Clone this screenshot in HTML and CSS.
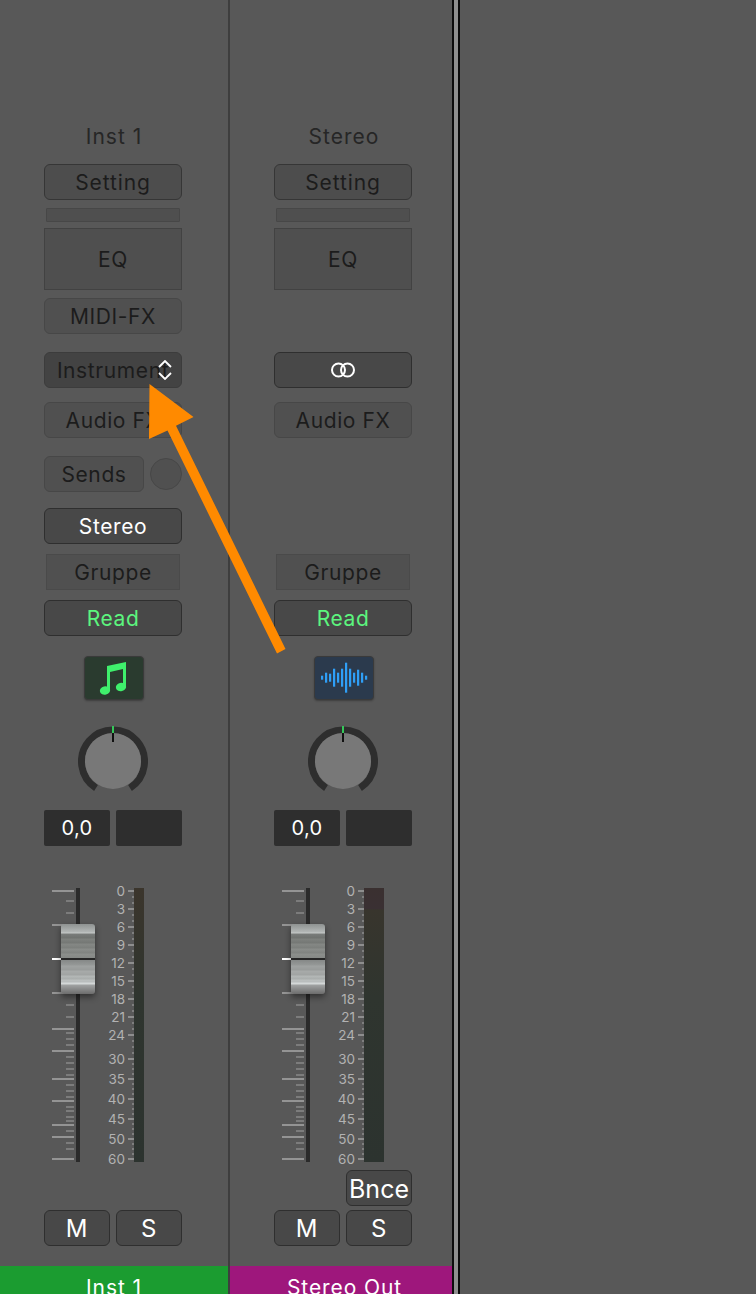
FILE: index.html
```html
<!DOCTYPE html>
<html lang="en">
<head>
    <meta charset="UTF-8">
    <title>Mixer</title>
    <link rel="stylesheet" href="styles.css">
</head>
<body>
    <svg class="defs" aria-hidden="true">
        <defs>
            <linearGradient id="meterInst" x1="0" y1="0" x2="0" y2="1">
                <stop offset="0" stop-color="#3b352c"/>
                <stop offset="0.4" stop-color="#2f352f"/>
                <stop offset="1" stop-color="#2c332f"/>
            </linearGradient>
            <linearGradient id="meterOut" x1="0" y1="0" x2="0" y2="1">
                <stop offset="0" stop-color="#3a3030"/>
                <stop offset="0.075" stop-color="#3a3033"/>
                <stop offset="0.08" stop-color="#38352d"/>
                <stop offset="0.4" stop-color="#2f352f"/>
                <stop offset="1" stop-color="#2c332f"/>
            </linearGradient>
            <symbol id="faderTicks" viewBox="0 0 138 280">
                <path class="tick-long" d="M8 6h22M8 40h22M8 108h22M8 144h22M8 166h22M8 194h22M8 216h22M8 240h22M8 252h22M8 274h22"/>
                <path class="tick-short" d="M22 16h8M22 28h8M22 120h8M22 132h8M22 148h8M22 154h8M22 160h8M22 172h8M22 178h8M22 184h8M22 190h8M22 200h8M22 206h8M22 212h8M22 222h8M22 226h8M22 232h8M22 236h8M22 246h8M22 258h8M22 264h8"/>
                <path class="tick-zero" d="M8 74h9"/>
                <rect class="track" x="32" y="3" width="4" height="274"/>
                <path class="tick-scale" d="M84 6h6M84 24h6M84 42h6M84 60h6M84 78h6M84 96h6M84 114h6M84 132h6M84 150h6M84 174h6M84 194h6M84 214h6M84 234h6M84 254h6M84 274h6"/>
                <path class="tick-dot" d="M88 12h2M88 18h2M88 30h2M88 36h2M88 48h2M88 54h2M88 66h2M88 72h2M88 84h2M88 90h2M88 102h2M88 108h2M88 120h2M88 126h2M88 138h2M88 144h2M88 156h2M88 162h2M88 168h2M88 179h2M88 184h2M88 189h2M88 199h2M88 204h2M88 209h2M88 219h2M88 224h2M88 229h2M88 239h2M88 244h2M88 249h2M88 259h2M88 264h2M88 269h2"/>
            </symbol>
        </defs>
    </svg>

    <div class="mixer">
        <section class="strip strip-inst">
            <div class="name">Inst 1</div>
            <div class="btn row-setting btn-setting">Setting</div>
            <div class="thin-bar"></div>
            <div class="eq">EQ</div>
            <div class="btn row-midi btn-dim">MIDI-FX</div>
            <div class="btn row-input btn-input">
                Instrument
                <svg class="updown" viewBox="0 0 14 20">
                    <path d="M1 7 7 1l6 6M1 13l6 6 6-6"/>
                </svg>
            </div>
            <div class="btn row-fx btn-dim">Audio FX</div>
            <div class="row-sends">
                <div class="btn btn-dim btn-sends">Sends</div>
                <div class="send-knob"></div>
            </div>
            <div class="btn row-output btn-on">Stereo</div>
            <div class="group row-group">Gruppe</div>
            <div class="btn row-read btn-on read">Read</div>
            <div class="track-icon icon-inst">
                <svg viewBox="0 0 60 44">
                    <path class="note" d="M23 10 42 6v25h-3V13l-13 3v18.500h-3z"/>
                    <ellipse class="note" cx="21" cy="34.500" rx="5.200" ry="4.200" transform="rotate(-15 21 34.500)"/>
                    <ellipse class="note" cx="37" cy="31" rx="5.200" ry="4.200" transform="rotate(-15 37 31)"/>
                </svg>
            </div>
            <svg class="knob" viewBox="0 0 70 70">
                <path class="knob-ring" d="M18 62A31.500 31.500 0 1 1 52 62"/>
                <circle class="knob-disc" cx="35" cy="35" r="28"/>
                <rect class="knob-mark" x="34" y="0" width="2" height="7"/>
                <rect class="knob-line" x="34" y="7" width="2" height="9"/>
            </svg>
            <div class="values">
                <div class="value">0,0</div>
                <div class="value"></div>
            </div>
            <div class="fader">
                <svg class="scale" viewBox="0 0 138 280">
                    <rect x="90" y="3" width="10" height="274" fill="url(#meterInst)"/>
                    <use href="#faderTicks" width="138" height="280"/>
                    <text x="81" y="11">0</text><text x="81" y="29">3</text><text x="81" y="47">6</text>
                    <text x="81" y="65">9</text><text x="81" y="83">12</text><text x="81" y="101">15</text>
                    <text x="81" y="119">18</text><text x="81" y="137">21</text><text x="81" y="155">24</text>
                    <text x="81" y="179">30</text><text x="81" y="199">35</text><text x="81" y="219">40</text>
                    <text x="81" y="239">45</text><text x="81" y="259">50</text><text x="81" y="279">60</text>
                </svg>
                <div class="cap"></div>
            </div>
            <div class="btn row-bounce slot"></div>
            <div class="pair">
                <div class="btn btn-on btn-big">M</div>
                <div class="btn btn-on btn-big">S</div>
            </div>
            <div class="label label-inst">Inst 1</div>
        </section>

        <section class="strip strip-out">
            <div class="name">Stereo</div>
            <div class="btn row-setting btn-setting">Setting</div>
            <div class="thin-bar"></div>
            <div class="eq">EQ</div>
            <div class="btn row-midi slot"></div>
            <div class="btn row-input btn-on">
                <svg class="link" viewBox="0 0 26 16">
                    <circle cx="8.500" cy="8" r="6.500"/>
                    <circle cx="17.500" cy="8" r="6.500"/>
                </svg>
            </div>
            <div class="btn row-fx btn-dim">Audio FX</div>
            <div class="row-sends"></div>
            <div class="btn row-output slot"></div>
            <div class="group row-group">Gruppe</div>
            <div class="btn row-read btn-on read">Read</div>
            <div class="track-icon icon-out">
                <svg viewBox="0 0 60 44">
                    <rect class="wave" x="7" y="19.700" width="2.200" height="4"/>
                    <rect class="wave" x="11" y="16.700" width="2.200" height="10"/>
                    <rect class="wave" x="15" y="17.700" width="2.200" height="8"/>
                    <rect class="wave" x="19" y="12.700" width="2.200" height="18"/>
                    <rect class="wave" x="23" y="16.700" width="2.200" height="10"/>
                    <rect class="wave" x="27" y="12.700" width="2.200" height="18"/>
                    <rect class="wave" x="31" y="6.700" width="2.200" height="30"/>
                    <rect class="wave" x="35" y="12.700" width="2.200" height="18"/>
                    <rect class="wave" x="39" y="16.700" width="2.200" height="10"/>
                    <rect class="wave" x="43" y="13.700" width="2.200" height="16"/>
                    <rect class="wave" x="47" y="16.700" width="2.200" height="10"/>
                    <rect class="wave" x="51" y="19.700" width="2.200" height="4"/>
                </svg>
            </div>
            <svg class="knob" viewBox="0 0 70 70">
                <path class="knob-ring" d="M18 62A31.500 31.500 0 1 1 52 62"/>
                <circle class="knob-disc" cx="35" cy="35" r="28"/>
                <rect class="knob-mark" x="34" y="0" width="2" height="7"/>
                <rect class="knob-line" x="34" y="7" width="2" height="9"/>
            </svg>
            <div class="values">
                <div class="value">0,0</div>
                <div class="value"></div>
            </div>
            <div class="fader">
                <svg class="scale" viewBox="0 0 138 280">
                    <rect x="90" y="3" width="20" height="274" fill="url(#meterOut)"/>
                    <use href="#faderTicks" width="138" height="280"/>
                    <text x="81" y="11">0</text><text x="81" y="29">3</text><text x="81" y="47">6</text>
                    <text x="81" y="65">9</text><text x="81" y="83">12</text><text x="81" y="101">15</text>
                    <text x="81" y="119">18</text><text x="81" y="137">21</text><text x="81" y="155">24</text>
                    <text x="81" y="179">30</text><text x="81" y="199">35</text><text x="81" y="219">40</text>
                    <text x="81" y="239">45</text><text x="81" y="259">50</text><text x="81" y="279">60</text>
                </svg>
                <div class="cap"></div>
            </div>
            <div class="btn row-bounce btn-on btn-bounce">Bnce</div>
            <div class="pair">
                <div class="btn btn-on btn-big">M</div>
                <div class="btn btn-on btn-big">S</div>
            </div>
            <div class="label label-out">Stereo Out</div>
        </section>

        <div class="rail"></div>
        <div class="empty"></div>
    </div>

    <svg class="arrow" viewBox="0 0 756 1294" aria-hidden="true">
        <polygon points="149.500,384 193.500,417 176,425.800 285.500,649 277,653.500 167.500,430.500 149,439"/>
    </svg>
</body>
</html>
```

FILE: styles.css
```css
html, body {
    margin: 0;
    padding: 0;
}
body {
    position: relative;
    width: 756px;
    height: 1294px;
    overflow: hidden;
    background-color: #585858;
    font-family: Inter, "Liberation Sans", sans-serif;
    font-size: 21px;
    letter-spacing: 0.6px;
    color: #1c1c1c;
}
.defs {
    position: absolute;
    width: 0;
    height: 0;
}
.mixer {
    display: flex;
    height: 1294px;
}
.strip {
    display: flex;
    flex-direction: column;
    box-sizing: border-box;
    height: 1294px;
    padding: 124px 0 0 44px;
}
.strip-inst {
    width: 230px;
    border-right: 2px solid #3e3e3e;
}
.strip-out {
    width: 222px;
}
.rail {
    width: 4px;
    background-color: #8f8f8f;
    border-left: 2px solid #0c0c0c;
    border-right: 2px solid #0c0c0c;
}
.empty {
    flex: 1;
}
.name {
    width: 140px;
    height: 26px;
    line-height: 26px;
    text-align: center;
    letter-spacing: 1px;
    color: #262626;
}

/* buttons */
.btn {
    position: relative;
    box-sizing: border-box;
    display: flex;
    align-items: center;
    justify-content: center;
    width: 138px;
    height: 36px;
    flex: none;
    padding-top: 1px;
    border: 1px solid #3a3a3a;
    border-radius: 6px;
}
.slot {
    border-color: transparent;
}
.btn-setting {
    background-color: #4d4d4d;
    border-color: #363636;
    letter-spacing: 0.9px;
}
.btn-dim {
    background-color: #505050;
    border-color: #474747;
}
.btn-input {
    background-color: #434343;
    border-color: #3c3c3c;
}
.btn-on {
    background-color: #484848;
    border-color: #2f2f2f;
    color: #fff;
}
.read {
    color: #5cf57e;
}
.btn-sends {
    width: 100px;
}
.btn-big {
    width: 66px;
    font-size: 24px;
}
.btn-bounce {
    width: 66px;
    margin-left: 72px;
    font-size: 25px;
    letter-spacing: 0;
}

/* vertical rhythm, the two strips share it */
.row-setting {
    margin-top: 14px;
}
.thin-bar {
    box-sizing: border-box;
    width: 134px;
    height: 14px;
    margin: 8px 0 0 2px;
    background-color: #4f4f4f;
    border: 1px solid #474747;
    border-radius: 1px;
}
.eq {
    box-sizing: border-box;
    display: flex;
    align-items: center;
    justify-content: center;
    width: 138px;
    height: 62px;
    margin-top: 6px;
    padding-top: 1px;
    background-color: #4f4f4f;
    border: 1px solid #424242;
}
.row-midi {
    margin-top: 8px;
}
.row-input {
    margin-top: 18px;
}
.row-fx {
    margin-top: 14px;
}
.row-sends {
    display: flex;
    align-items: center;
    gap: 6px;
    width: 138px;
    height: 36px;
    margin-top: 18px;
}
.send-knob {
    box-sizing: border-box;
    width: 32px;
    height: 32px;
    background-color: #505050;
    border: 1px solid #474747;
    border-radius: 50%;
}
.row-output {
    margin-top: 16px;
}
.group {
    box-sizing: border-box;
    display: flex;
    align-items: center;
    justify-content: center;
    width: 134px;
    height: 36px;
    padding-top: 1px;
    background-color: #505050;
    border: 1px solid #4a4a4a;
}
.row-group {
    margin: 10px 0 0 2px;
}
.row-read {
    margin-top: 10px;
}

/* chevrons and link glyph */
.updown {
    position: absolute;
    top: 7px;
    left: 113px;
    width: 14px;
    height: 20px;
    fill: none;
    stroke: #fff;
    stroke-width: 1.800;
}
.link {
    width: 26px;
    height: 16px;
    margin-top: -1px;
    fill: none;
    stroke: #fff;
    stroke-width: 2;
}

/* track icon */
.track-icon {
    box-sizing: border-box;
    width: 60px;
    height: 44px;
    margin: 20px 0 0 40px;
    border: 1px solid #3a3a3a;
    border-radius: 4px;
    box-shadow: 0 1px 2px rgba(0, 0, 0, 0.3);
}
.track-icon svg {
    display: block;
    width: 60px;
    height: 44px;
    margin: -1px;
}
.icon-inst {
    background-color: #2a3b2f;
}
.icon-out {
    background-color: #2b3a4d;
}
.note {
    fill: #3ff06c;
}
.wave {
    fill: #2f9ff7;
}

/* pan knob */
.knob {
    display: block;
    width: 70px;
    height: 70px;
    margin: 26px 0 0 34px;
    flex: none;
}
.knob-ring {
    fill: none;
    stroke: #2e2e2e;
    stroke-width: 7;
}
.knob-disc {
    fill: #787878;
}
.knob-mark {
    fill: #35c85a;
}
.knob-line {
    fill: #111;
}
.values {
    display: flex;
    gap: 6px;
    margin-top: 14px;
}
.value {
    width: 66px;
    height: 36px;
    line-height: 36px;
    text-align: center;
    font-size: 20px;
    letter-spacing: 0.4px;
    background-color: #2e2e2e;
    border-radius: 2px;
    color: #fff;
}

/* fader and meter */
.fader {
    position: relative;
    width: 138px;
    height: 280px;
    margin-top: 39px;
    flex: none;
}
.scale {
    display: block;
    width: 138px;
    height: 280px;
    overflow: visible;
}
.scale text {
    font-size: 13.500px;
    letter-spacing: 0;
    text-anchor: end;
    fill: #b2b2b2;
}
.tick-long {
    stroke: #949494;
    stroke-width: 2;
}
.tick-short {
    stroke: #7c7c7c;
    stroke-width: 2;
}
.tick-zero {
    stroke: #fff;
    stroke-width: 2;
}
.track {
    fill: #2a2a2a;
}
.tick-scale {
    stroke: #a0a0a0;
    stroke-width: 1.500;
}
.tick-dot {
    stroke: #8c8c8c;
    stroke-width: 1.500;
}
.cap {
    position: absolute;
    top: 39px;
    left: 17px;
    width: 34px;
    height: 70px;
    border-radius: 3px;
    box-shadow: 0 3px 6px rgba(0, 0, 0, 0.45);
    background: linear-gradient(to bottom,
        #8e9291 0, #b3b7b6 8px, #c6cac9 9px, #797c7a 10px,
        #6f726f 14px, #7e817e 15px, #747774 19px, #858885 20px,
        #7c7f7c 24px, #8b8e8b 25px, #7f827f 29px, #8c8f8c 30px,
        #858885 34px, #262626 34.500px, #262626 35.500px, #878a89 36.500px,
        #959897 41px, #a0a3a2 42px, #989b9a 46px, #a8abaa 47px,
        #a0a3a2 51px, #b4b8b7 52px, #a9adac 55px, #bcc0bf 56px,
        #b8bcbc 58px, #d4d8d8 59px, #d4d8d8 60px, #a0a2a2 61px,
        #6c6c6c 70px);
}
.row-bounce {
    margin-top: 5px;
}
.pair {
    display: flex;
    gap: 6px;
    margin-top: 4px;
}
.label {
    box-sizing: border-box;
    margin: 20px 0 0 -44px;
    height: 28px;
    padding-top: 10px;
    line-height: 24px;
    text-align: center;
    letter-spacing: 0.9px;
    color: #fff;
}
.label-inst {
    width: 228px;
    background-color: #1b9c30;
}
.label-out {
    width: 222px;
    padding-left: 7px;
    background-color: #9e177c;
}

/* annotation drawn over the shot */
.arrow {
    position: absolute;
    top: 0;
    left: 0;
    width: 756px;
    height: 1294px;
    pointer-events: none;
    fill: #ff8a00;
}
```
